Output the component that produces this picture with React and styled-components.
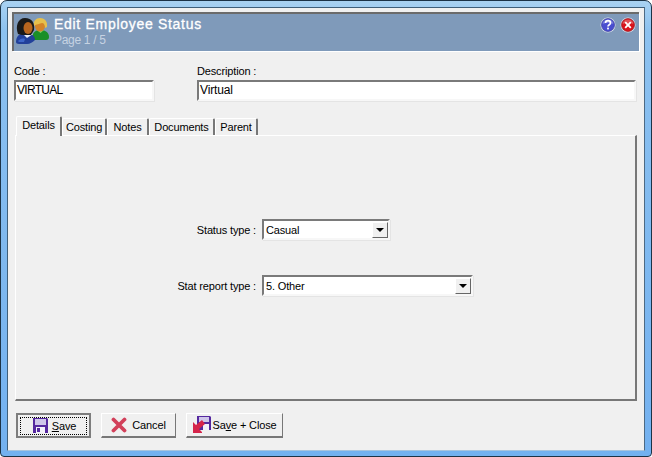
import React from 'react';
import styled, { createGlobalStyle } from 'styled-components';

const Global = createGlobalStyle`
    html, body {
        margin: 0;
        padding: 0;
        background: #fff;
    }
    body {
        font-family: "Liberation Sans", Arial, sans-serif;
        font-size: 11px;
        letter-spacing: -0.15px;
        color: #000;
    }
`;

const Window = styled.div`
    box-sizing: border-box;
    width: 652px;
    height: 457px;
    border: 1px solid #1c3347;
    border-radius: 7px 7px 4px 4px;
    background: linear-gradient(180deg, #a9d2f2 0, #8cc1ef 30px, #73b1f0 100%);
    padding: 6px 6px 5px;
    overflow: hidden;
`;

const Client = styled.div`
    box-sizing: border-box;
    height: 100%;
    background: #f0f0f0;
    border: 1px solid #3f5f7a;
    border-bottom-color: #a8c4de;
    border-right-color: #4d6a84;
    padding: 4px 4px 0 4px;
    display: flex;
    flex-direction: column;
`;

const Banner = styled.header`
    display: flex;
    align-items: flex-start;
    height: 39px;
    flex: none;
    background: #7f9aba;
    border-top: 2px solid #6b6b6b;
    border-left: 2px solid #6b6b6b;
    box-sizing: border-box;
    box-shadow: 1px 1px 0 #fff;
    width: 627px;
    padding: 1px 0 0 1px;
`;

const BannerText = styled.div`
    margin-left: 5px;
    flex: 1;
`;

const Title = styled.div`
    color: #fff;
    font-size: 14px;
    font-weight: 400;
    line-height: 16px;
    letter-spacing: 0.7px;
    -webkit-text-stroke: 0.3px #fff;
    margin-top: 1px;
`;

const Subtitle = styled.div`
    color: #c6d3e2;
    font-size: 12px;
    line-height: 14px;
    letter-spacing: -0.3px;
    margin-top: 1px;
`;

const BannerButtons = styled.div`
    display: flex;
    gap: 4px;
    padding: 2px 3px 0 0;
`;

const Fields = styled.div`
    display: flex;
    gap: 43px;
    margin-top: 13px;
    padding-left: 2px;
`;

const Field = styled.label`
    display: flex;
    flex-direction: column;
    width: ${(p) => p.$width}px;
`;

const FieldLabel = styled.span`
    line-height: 14px;
    height: 16px;
`;

const Sunken = styled.div`
    box-sizing: border-box;
    background: #fff;
    border: 2px solid;
    border-color: #7a7a7a #f7f7f7 #f7f7f7 #7a7a7a;
    box-shadow: 1px 1px 0 #e4e4e4;
`;

const TextInput = styled(Sunken)`
    height: 21px;
    padding-left: 1px;
    font-size: 12px;
    line-height: 17px;
    letter-spacing: ${(p) => (p.$caps ? '-0.7px' : '-0.15px')};
`;

const TabBar = styled.div`
    display: flex;
    align-items: flex-end;
    height: 20px;
    margin: 14px 0 0 3px;
    padding-left: 1px;
    position: relative;
    z-index: 1;
    flex: none;
`;

const Tab = styled.div`
    box-sizing: border-box;
    height: ${(p) => (p.$active ? 20 : 17)}px;
    width: ${(p) => p.$width}px;
    background: #f0f0f0;
    border-top: 1px solid #fff;
    border-left: 1px solid #fff;
    border-right: 2px solid #777;
    border-radius: 2px 2px 0 0;
    text-align: center;
    line-height: 16px;
    ${(p) => p.$active && 'margin-bottom: -1px;'}
`;

const Panel = styled.section`
    box-sizing: border-box;
    flex: none;
    width: 622px;
    height: 266px;
    margin-left: 3px;
    border-top: 1px solid #fff;
    border-left: 1px solid #fff;
    border-right: 2px solid #777;
    border-bottom: 2px solid #777;
    padding-top: 83px;
    display: grid;
    grid-template-columns: 240px 1fr;
    grid-auto-rows: 21px;
    row-gap: 35px;
    column-gap: 6px;
    align-items: center;
`;

const RowLabel = styled.span`
    text-align: right;
`;

const Select = styled(Sunken)`
    width: ${(p) => p.$width}px;
    height: 21px;
    display: flex;
    align-items: center;
    justify-content: space-between;
    padding-left: 2px;
`;

const Arrow = styled.span`
    box-sizing: border-box;
    width: 16px;
    height: 16px;
    background: #f0f0f0;
    border: 1px solid;
    border-color: #fff #666 #666 #fff;
    display: flex;
    align-items: center;
    justify-content: center;

    &::after {
        content: '';
        border-left: 4px solid transparent;
        border-right: 4px solid transparent;
        border-top: 4px solid #000;
    }
`;

const Buttons = styled.footer`
    display: flex;
    gap: 10px;
    margin: 12px 0 0 4px;
`;

const Button = styled.button`
    box-sizing: border-box;
    font: inherit;
    letter-spacing: inherit;
    color: #000;
    height: 25px;
    width: ${(p) => p.$width}px;
    background: #f0f0f0;
    border: ${(p) => (p.$default ? 2 : 1)}px solid;
    border-color: ${(p) => (p.$default ? '#7d7d7d' : '#fff #777 #777 #fff')};
    border-bottom-width: 2px;
    border-right-width: ${(p) => (p.$default ? 2 : 1)}px;
    padding: 0;
    display: flex;
    align-items: center;
    justify-content: center;
    gap: ${(p) => p.$gap}px;
    position: relative;

    ${(p) =>
        p.$default &&
        `&::after {
            content: '';
            position: absolute;
            inset: 2px 2px 1px 2px;
            border: 1px dotted #000;
        }`}
`;

const Key = styled.span`
    text-decoration: underline;
`;

const DiskSvg = styled.svg`
    margin-left: 2px;
`;

const PeopleIcon = () => (
    <svg width="34" height="34" viewBox="0 0 34 34">
        <path d="M17 24c0-6 3-9 8.500-9s8.500 3 8.500 7c0 2-1 3-3 3H20c-2 0-3 0-3-1z" fill="#1a8f28" />
        <path d="M22 15l3.500 3 3.500-3z" fill="#7ad462" />
        <ellipse cx="25" cy="11" rx="5" ry="5.500" fill="#d48428" />
        <path d="M19 11c-1-5 2-8 6-8s8 3 7 9l-2 1c0-3-1-5-3-5-2 1-6 1-8 3z" fill="#e6c04c" />
        <path d="M1 27c0-6 4-9 9-9s10 2 10 7c-2 2-5 4-8 4H4c-2 0-3-1-3-2z" fill="#22409a" />
        <path d="M3 26c2-2 4-3 7-2l-1 3H4z" fill="#3e66c8" />
        <path d="M8 19l4 4 6-4-4-1z" fill="#e8eef8" />
        <path d="M3 19C0 11 3 3 10 3s10 5 9 12l-3 5H7z" fill="#1a1a1a" />
        <ellipse cx="13" cy="13" rx="4.500" ry="6" fill="#b8661f" />
    </svg>
);

const RoundButton = ({ color, dark, children }) => (
    <svg width="16" height="16" viewBox="0 0 16 16">
        <circle cx="8" cy="8" r="7.5" fill="#dfe6f0" />
        <circle cx="8" cy="8" r="6.5" fill={color} />
        <path d="M2.5 7a5.5 4.5 0 0 1 11 0c-3-1.5-8-1.5-11 0z" fill="#fff" opacity=".25" />
        <circle cx="8" cy="8" r="6.5" fill="none" stroke={dark} strokeWidth=".6" />
        {children}
    </svg>
);

const HelpIcon = () => (
    <RoundButton color="#4a4fd0" dark="#2a2c90">
        <path d="M5.5 6c0-3.2 5-3.2 5 0 0 1.8-2.5 1.8-2.5 3.6" fill="none" stroke="#fff" strokeWidth="1.7" />
        <rect x="7.1" y="10.6" width="1.8" height="1.8" fill="#fff" />
    </RoundButton>
);

const CloseIcon = () => (
    <RoundButton color="#d8141c" dark="#8c0a10">
        <path d="M5.2 5.2l5.6 5.6M10.8 5.2l-5.6 5.6" stroke="#fff" strokeWidth="1.9" />
    </RoundButton>
);

const DiskIcon = () => (
    <DiskSvg width="15" height="15" viewBox="0 0 15 15">
        <path d="M0 0h14l1 1v14H0z" fill="#55289f" />
        <rect x="2" y="1" width="11" height="6" fill="#cfc6ea" />
        <rect x="3" y="9" width="9" height="6" fill="#f2f0fa" />
        <rect x="4" y="10" width="3" height="4" fill="#55289f" />
    </DiskSvg>
);

const CrossIcon = () => (
    <svg width="16" height="16" viewBox="0 0 16 16">
        <path d="M2.500 2.500l11 11M13.500 2.500l-11 11" stroke="#d2405a" strokeWidth="3.8" strokeLinecap="round" />
    </svg>
);

const SaveCloseIcon = () => (
    <svg width="18" height="18" viewBox="0 0 18 18">
        <path d="M4 0h13l1 1v13H4z" fill="#55289f" />
        <rect x="6" y="1" width="10" height="5" fill="#cfc6ea" />
        <rect x="10" y="8" width="6" height="6" fill="#f2f0fa" />
        <path d="M0 6l3 3 6-5 3 4-6 5 3 3v1H0z" fill="#d5244a" />
    </svg>
);

const tabs = [
    ['Details', 46],
    ['Costing', 45],
    ['Notes', 42],
    ['Documents', 66],
    ['Parent', 43],
];

const App = () => (
    <>
        <Global />
        <Window>
            <Client>
                <Banner>
                    <PeopleIcon />
                    <BannerText>
                        <Title>Edit Employee Status</Title>
                        <Subtitle>Page 1 / 5</Subtitle>
                    </BannerText>
                    <BannerButtons>
                        <HelpIcon />
                        <CloseIcon />
                    </BannerButtons>
                </Banner>
                <Fields>
                    <Field $width={140}>
                        <FieldLabel>Code :</FieldLabel>
                        <TextInput $caps>VIRTUAL</TextInput>
                    </Field>
                    <Field $width={439}>
                        <FieldLabel>Description :</FieldLabel>
                        <TextInput>Virtual</TextInput>
                    </Field>
                </Fields>
                <TabBar>
                    {tabs.map(([name, width], i) => (
                        <Tab key={name} $width={width} $active={i === 0}>
                            {name}
                        </Tab>
                    ))}
                </TabBar>
                <Panel>
                    <RowLabel>Status type :</RowLabel>
                    <Select $width={128}>
                        Casual
                        <Arrow />
                    </Select>
                    <RowLabel>Stat report type :</RowLabel>
                    <Select $width={211}>
                        5. Other
                        <Arrow />
                    </Select>
                </Panel>
                <Buttons>
                    <Button $width={75} $gap={4} $default>
                        <DiskIcon />
                        <span>
                            <Key>S</Key>ave
                        </span>
                    </Button>
                    <Button $width={75} $gap={5}>
                        <CrossIcon />
                        Cancel
                    </Button>
                    <Button $width={97} $gap={2}>
                        <SaveCloseIcon />
                        <span>
                            Sa<Key>v</Key>e + Close
                        </span>
                    </Button>
                </Buttons>
            </Client>
        </Window>
    </>
);

export default App;
